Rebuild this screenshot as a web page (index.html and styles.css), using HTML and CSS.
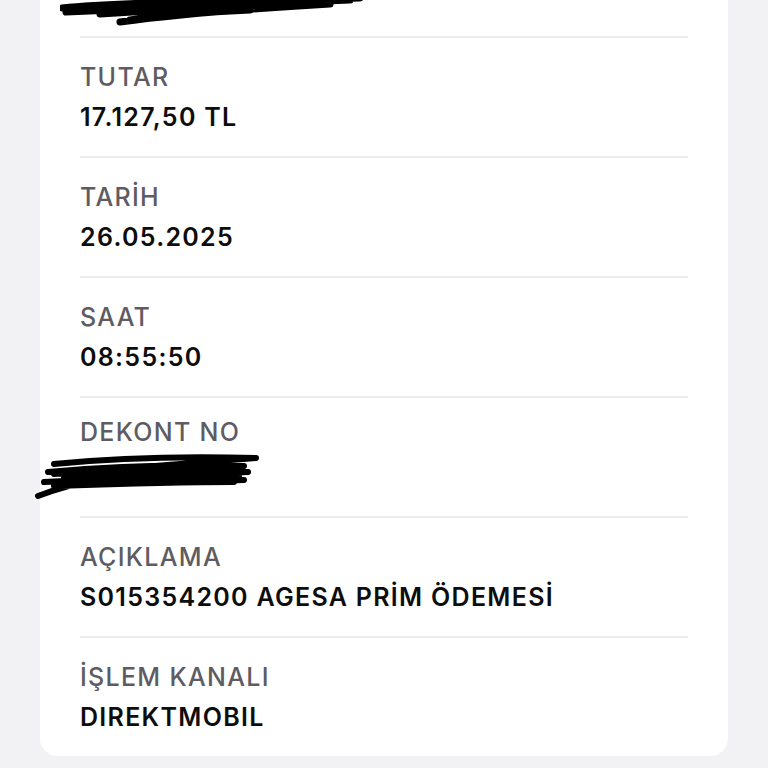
FILE: index.html
```html
<!DOCTYPE html>
<html lang="tr">
<head>
    <meta charset="UTF-8">
    <meta name="viewport" content="width=device-width, initial-scale=1.0">
    <title>Dekont Detayı</title>
    <link rel="stylesheet" href="styles.css">
</head>
<body>
    <div class="card">
        <div class="row row-top">
            <svg class="scribble scribble-top" width="320" height="30" viewBox="0 0 320 30">
                <path d="M2 8 C60 2 150 2 300 -2 M6 12 C90 8 200 4 290 0 M60 22 C120 14 200 8 270 4 M70 20 C110 14 150 12 190 10 M40 14 C100 10 180 6 250 4" fill="none" stroke="#000" stroke-width="7" stroke-linecap="round"/>
            </svg>
        </div>
        <div class="row">
            <div class="label">TUTAR</div>
            <div class="value">17.127,50 TL</div>
        </div>
        <div class="row">
            <div class="label">TARİH</div>
            <div class="value">26.05.2025</div>
        </div>
        <div class="row">
            <div class="label">SAAT</div>
            <div class="value">08:55:50</div>
        </div>
        <div class="row">
            <div class="label">DEKONT NO</div>
            <svg class="scribble" width="230" height="50" viewBox="0 0 230 50">
                <path d="M20 12 C80 6 150 4 222 6 L20 22 C80 18 150 16 214 20 L10 30 C80 26 150 26 210 28 L20 34 C80 32 150 30 200 30 M4 44 C40 30 90 20 160 14 M14 20 C80 14 140 12 210 14 M30 26 C90 22 150 22 205 24" fill="none" stroke="#000" stroke-width="6" stroke-linecap="round" stroke-linejoin="round"/>
            </svg>
        </div>
        <div class="row">
            <div class="label">AÇIKLAMA</div>
            <div class="value">S015354200 AGESA PRİM ÖDEMESİ</div>
        </div>
        <div class="row">
            <div class="label">İŞLEM KANALI</div>
            <div class="value">DIREKTMOBIL</div>
        </div>
    </div>
</body>
</html>
```
FILE: styles.css
```css
body {
    margin: 0;
    background-color: #f2f2f5;
    font-family: 'Inter', 'Noto Sans', sans-serif;
    height: 768px;
    overflow: hidden;
}

.card {
    background-color: #fff;
    margin: 0 40px;
    padding: 0 40px;
    border-radius: 0 0 18px 18px;
}

.row {
    height: 118px;
    border-top: 2px solid #ececee;
    display: flex;
    flex-direction: column;
    justify-content: center;
}

.row-top {
    height: 36px;
    border-top: none;
    justify-content: flex-start;
}

.label {
    color: #5e5c62;
    font-size: 25px;
    font-weight: 500;
    line-height: 40px;
    letter-spacing: 1.3px;
}

.value {
    color: #0d0d0d;
    font-size: 25px;
    font-weight: 600;
    line-height: 40px;
    letter-spacing: 1.3px;
}

.scribble {
    display: block;
    margin-left: -46px;
}

.scribble-top {
    margin-left: -20px;
}
```
